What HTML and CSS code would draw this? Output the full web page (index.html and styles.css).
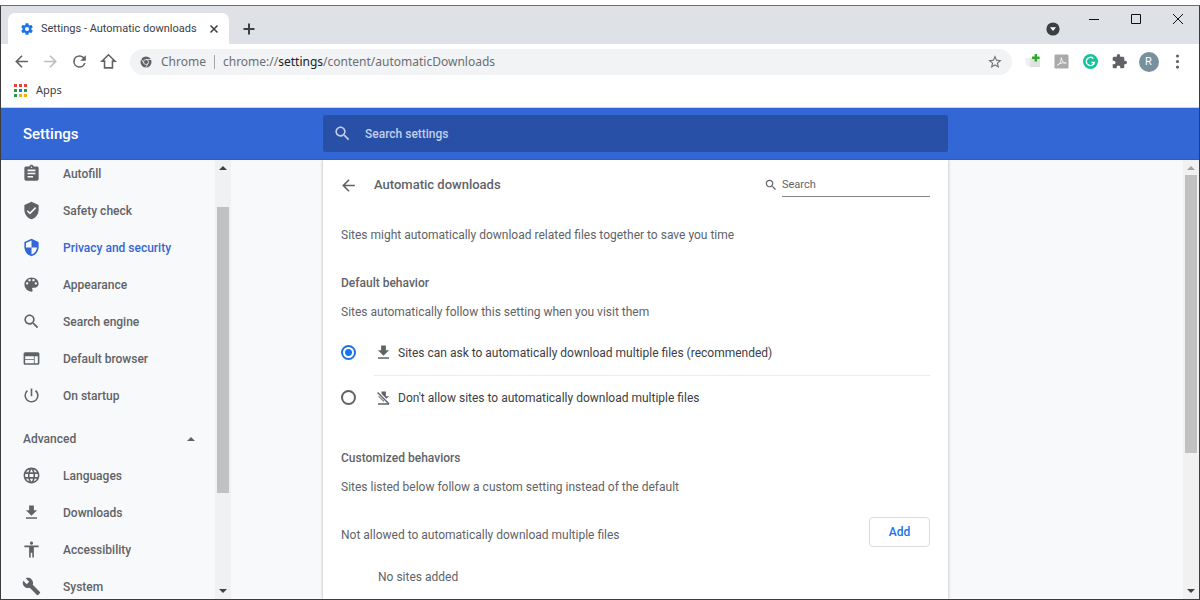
FILE: index.html
```html
<!DOCTYPE html>
<html lang="en">
<head>
<meta charset="utf-8">
<title>Settings - Automatic downloads</title>
<link rel="stylesheet" href="styles.css">
</head>
<body>
<svg class="defs" aria-hidden="true">
  <symbol id="search" viewBox="0 0 24 24"><path d="M15.5 14h-.79l-.28-.27C15.41 12.59 16 11.11 16 9.5 16 5.91 13.09 3 9.5 3S3 5.91 3 9.5 5.91 16 9.5 16c1.61 0 3.09-.59 4.23-1.57l.27.28v.79l5 4.99L20.49 19l-4.99-5zm-6 0C7.01 14 5 11.99 5 9.5S7.01 5 9.5 5 14 7.01 14 9.5 11.99 14 9.5 14z"/></symbol>
  <symbol id="back" viewBox="0 0 24 24"><path d="M20 11H7.83l5.59-5.59L12 4l-8 8 8 8 1.41-1.41L7.83 13H20v-2z"/></symbol>
  <symbol id="download" viewBox="0 0 24 24"><path d="M19 9h-4V3H9v6H5l7 7 7-7zM5 18v2h14v-2H5z"/></symbol>
</svg>
<div class="window">
  <div class="tabstrip">
    <div class="tab">
      <svg class="tab-icon" viewBox="0 0 24 24"><path fill-rule="evenodd" d="M19.43 12.98c.04-.32.07-.64.07-.98s-.03-.66-.07-.98l2.11-1.65c.19-.15.24-.42.12-.64l-2-3.46c-.12-.22-.39-.3-.61-.22l-2.49 1c-.52-.4-1.08-.73-1.69-.98l-.38-2.65A.49.49 0 0 0 14 2h-4c-.25 0-.46.18-.49.42l-.38 2.65c-.61.25-1.17.59-1.69.98l-2.49-1c-.23-.09-.49 0-.61.22l-2 3.46c-.13.22-.07.49.12.64l2.11 1.65c-.04.32-.07.65-.07.98s.03.66.07.98l-2.11 1.65c-.19.15-.24.42-.12.64l2 3.46c.12.22.39.3.61.22l2.49-1c.52.4 1.08.73 1.69.98l.38 2.65c.03.24.24.42.49.42h4c.25 0 .46-.18.49-.42l.38-2.65c.61-.25 1.17-.59 1.69-.98l2.49 1c.23.09.49 0 .61-.22l2-3.46c.12-.22.07-.49-.12-.64l-2.11-1.65zM12 15.5a3.5 3.5 0 1 1 0-7 3.5 3.5 0 0 1 0 7z"/></svg>
      <span class="tab-title">Settings - Automatic downloads</span>
      <button class="tab-close" aria-label="Close tab"><svg viewBox="0 0 10 10"><path d="M1.5 1.5l7 7M8.5 1.5l-7 7"/></svg></button>
    </div>
    <button class="new-tab" aria-label="New tab"><svg viewBox="0 0 12 12"><path d="M6 .5v11M.5 6h11"/></svg></button>
    <button class="tab-search" aria-label="Search tabs"><svg viewBox="0 0 14 14"><circle cx="7" cy="7" r="6.6"/><path d="M4 5.3h6L7 9z"/></svg></button>
    <div class="controls">
      <button aria-label="Minimize"><svg viewBox="0 0 12 12"><path d="M1 6.5h10"/></svg></button>
      <button aria-label="Maximize"><svg viewBox="0 0 12 12"><path d="M1.5 1.5h9v9h-9z"/></svg></button>
      <button aria-label="Close"><svg viewBox="0 0 12 12"><path d="M1 1l10 10M11 1L1 11"/></svg></button>
    </div>
  </div>

  <div class="toolbar">
    <div class="tools">
      <button aria-label="Back"><svg class="icon"><use href="#back"/></svg></button>
      <button class="off" aria-label="Forward"><svg class="icon" viewBox="0 0 24 24"><path d="M12 4l-1.41 1.41L16.17 11H4v2h12.17l-5.58 5.59L12 20l8-8z"/></svg></button>
      <button aria-label="Reload"><svg class="icon" viewBox="0 0 24 24"><path d="M17.65 6.35A7.96 7.96 0 0 0 12 4a8 8 0 1 0 7.73 10h-2.08A6 6 0 1 1 12 6c1.66 0 3.14.69 4.22 1.78L13 11h7V4l-2.350 2.350z"/></svg></button>
      <button aria-label="Home"><svg class="icon" viewBox="0 0 24 24"><path d="M12 3.500L3.800 11.500H7V20h10v-8.500h3.200z" fill="none" stroke="currentColor" stroke-width="2"/></svg></button>
    </div>
    <div class="omnibox">
      <svg class="site-icon" viewBox="0 0 24 24"><circle cx="12" cy="12" r="11"/><g fill="none" stroke="#f1f3f4" stroke-width="1.500"><circle cx="12" cy="12" r="5"/><path d="M12 7h10M7.700 14.500L2.700 6M16.300 14.500L11.500 23"/></g></svg>
      <span class="site">Chrome</span>
      <span class="url">chrome://<b>settings</b>/content/automaticDownloads</span>
      <button class="star" aria-label="Bookmark this tab"><svg viewBox="0 0 24 24"><path d="M22 9.240l-7.190-.62L12 2 9.190 8.630 2 9.240l5.460 4.730L5.820 21 12 17.270 18.180 21l-1.630-7.030L22 9.240zM12 15.400l-3.760 2.270 1-4.280-3.320-2.880 4.380-.38L12 6.100l1.710 4.040 4.380.38-3.320 2.880 1 4.280L12 15.400z"/></svg></button>
    </div>
    <div class="tools">
      <button aria-label="Page extension"><svg class="ext" viewBox="0 0 16 16"><path d="M5 4h11v10H5z" fill="#e0e0e0"/><path d="M1 5h4v7H2zM5 4l3 8" fill="#f0f0f0" stroke="#ececec"/><path d="M11.500 0v8M7.500 4h8" stroke="#2aa82a" stroke-width="2.500"/></svg></button>
      <button aria-label="Acrobat"><svg class="ext" viewBox="0 0 16 16"><rect width="15" height="15" x=".5" y=".5" rx="1.500" fill="#aaa"/><path d="M3.500 12c2-.8 4.500-4 4.300-8.200.3 4 2 5.700 5.200 5.900-3-.8-6.500-.2-9.500 2.300z" fill="none" stroke="#f6f6f6"/></svg></button>
      <button aria-label="Grammarly"><svg class="ext" viewBox="0 0 16 16"><circle cx="8" cy="8" r="8" fill="#15c39a"/><path d="M11 4.800A4.400 4.400 0 1 0 12.200 9H9" fill="none" stroke="#fff" stroke-width="1.500"/></svg></button>
      <button aria-label="Extensions"><svg class="ext" viewBox="1 1 22 22"><path d="M20.500 11H19V7a2 2 0 0 0-2-2h-4V3.500a2.500 2.500 0 0 0-5 0V5H4a2 2 0 0 0-2 2v3.800h1.500a2.700 2.700 0 0 1 0 5.400H2V20c0 1.100.9 2 2 2h3.800v-1.500a2.700 2.700 0 0 1 5.400 0V22H17a2 2 0 0 0 2-2v-4h1.500a2.500 2.500 0 0 0 0-5z"/></svg></button>
      <button class="avatar" aria-label="Profile R"><span>R</span></button>
      <button aria-label="Menu"><svg class="icon" viewBox="0 0 24 24"><circle cx="12" cy="5" r="2"/><circle cx="12" cy="12" r="2"/><circle cx="12" cy="19" r="2"/></svg></button>
    </div>
  </div>

  <div class="bookmarks">
    <a href="#apps"><svg viewBox="0 0 13 13"><g fill="#ea4335"><path d="M0 0h3v3H0zM5 0h3v3H5zM10 0h3v3h-3z"/></g><path fill="#1e9b4c" d="M0 5h3v3H0zM0 10h3v3H0z"/><path fill="#1a73e8" d="M5 5h3v3H5z"/><path fill="#1e9b4c" d="M10 5h3v3h-3z"/><path fill="#fbaf00" d="M5 10h3v3H5zM10 10h3v3h-3z"/></svg>Apps</a>
  </div>

  <header class="header">
    <h1>Settings</h1>
    <label class="search-settings"><svg class="icon"><use href="#search"/></svg><input type="text" placeholder="Search settings" aria-label="Search settings"></label>
  </header>

  <div class="page">
    <div class="sidebar">
      <nav class="nav">
        <a href="#autofill"><svg class="icon" viewBox="0 0 24 24"><path d="M19 3h-4.180C14.400 1.840 13.300 1 12 1s-2.400.84-2.820 2H5c-1.100 0-2 .9-2 2v14c0 1.100.9 2 2 2h14c1.100 0 2-.9 2-2V5c0-1.100-.9-2-2-2zm-7 0c.55 0 1 .45 1 1s-.45 1-1 1-1-.45-1-1 .45-1 1-1zm2 14H7v-2h7v2zm3-4H7v-2h10v2zm0-4H7V7h10v2z"/></svg>Autofill</a>
        <a href="#safety"><svg class="icon" viewBox="0 0 24 24"><path d="M12 1L3 5v6c0 5.550 3.840 10.740 9 12 5.160-1.260 9-6.450 9-12V5l-9-4zm-2 16l-4-4 1.410-1.410L10 14.170l6.590-6.590L18 9l-8 8z"/></svg>Safety check</a>
        <a href="#privacy" class="current" aria-current="page"><svg class="icon" viewBox="0 0 24 24"><path d="M12 1L3 5v6c0 5.550 3.840 10.740 9 12 5.160-1.260 9-6.450 9-12V5l-9-4zm0 10.990h7c-.53 4.120-3.280 7.790-7 8.940V12H5V6.300l7-3.110v8.800z"/></svg>Privacy and security</a>
        <a href="#appearance"><svg class="icon" viewBox="0 0 24 24"><path d="M12 3a9 9 0 0 0 0 18c.83 0 1.500-.67 1.500-1.500 0-.39-.15-.74-.39-1.010-.23-.26-.38-.61-.38-.99 0-.83.67-1.500 1.500-1.500H16c2.760 0 5-2.240 5-5 0-4.420-4.030-8-9-8zm-5.500 9a1.500 1.500 0 1 1 0-3 1.500 1.500 0 0 1 0 3zm3-4a1.500 1.500 0 1 1 0-3 1.500 1.500 0 0 1 0 3zm5 0a1.500 1.500 0 1 1 0-3 1.500 1.500 0 0 1 0 3zm3 4a1.500 1.500 0 1 1 0-3 1.500 1.500 0 0 1 0 3z"/></svg>Appearance</a>
        <a href="#engine"><svg class="icon"><use href="#search"/></svg>Search engine</a>
        <a href="#browser"><svg class="icon" viewBox="0 0 24 24"><path d="M20 4H4c-1.100 0-1.990.9-1.990 2L2 18c0 1.100.9 2 2 2h16c1.100 0 2-.9 2-2V6c0-1.100-.9-2-2-2zm-5 14H4v-4h11v4zm0-5H4V9h11v4zm5 5h-4V9h4v9z"/></svg>Default browser</a>
        <a href="#startup"><svg class="icon" viewBox="0 0 24 24"><path d="M13 3h-2v10h2V3zm4.830 2.170l-1.420 1.420A6.920 6.920 0 0 1 19 12a7 7 0 1 1-11.420-5.420L6.170 5.170A8.930 8.930 0 0 0 3 12a9 9 0 0 0 18 0c0-2.740-1.230-5.180-3.170-6.830z"/></svg>On startup</a>
        <button class="advanced" aria-expanded="true">Advanced<svg viewBox="0 0 8 4"><path d="M0 4l4-4 4 4z"/></svg></button>
        <a href="#languages"><svg class="icon" viewBox="0 0 24 24"><path d="M11.990 2C6.470 2 2 6.480 2 12s4.470 10 9.990 10C17.520 22 22 17.520 22 12S17.520 2 11.990 2zm6.930 6h-2.950a15.650 15.650 0 0 0-1.380-3.560A8.030 8.030 0 0 1 18.920 8zM12 4.040c.83 1.200 1.480 2.530 1.910 3.960h-3.820c.43-1.430 1.080-2.760 1.910-3.960zM4.260 14C4.100 13.360 4 12.690 4 12s.1-1.360.26-2h3.380c-.08.66-.14 1.320-.14 2s.06 1.340.14 2H4.260zm.82 2h2.950c.32 1.250.78 2.450 1.380 3.560A7.990 7.990 0 0 1 5.080 16zm2.950-8H5.080a7.990 7.990 0 0 1 4.330-3.560A15.650 15.650 0 0 0 8.030 8zM12 19.960c-.83-1.200-1.480-2.530-1.910-3.960h3.820c-.43 1.430-1.080 2.760-1.910 3.960zM14.340 14H9.660c-.09-.66-.16-1.320-.16-2s.07-1.350.16-2h4.680c.09.650.16 1.320.16 2s-.07 1.340-.16 2zm.25 5.560c.6-1.110 1.060-2.310 1.380-3.560h2.950a8.030 8.030 0 0 1-4.330 3.560zM16.360 14c.08-.66.14-1.320.14-2s-.06-1.340-.14-2h3.380c.16.640.26 1.310.26 2s-.1 1.360-.26 2h-3.380z"/></svg>Languages</a>
        <a href="#downloads"><svg class="icon"><use href="#download"/></svg>Downloads</a>
        <a href="#accessibility"><svg class="icon" viewBox="0 0 24 24"><path d="M12 2c1.100 0 2 .9 2 2s-.9 2-2 2-2-.9-2-2 .9-2 2-2zm9 7h-6v13h-2v-6h-2v6H9V9H3V7h18v2z"/></svg>Accessibility</a>
        <a href="#system"><svg class="icon" viewBox="0 0 24 24"><path d="M22.700 19l-9.100-9.100c.9-2.300.4-5-1.500-6.900-2-2-5-2.400-7.400-1.300L9 6 6 9 1.600 4.700C.4 7.100.9 10.100 2.900 12.100c1.900 1.900 4.600 2.400 6.900 1.500l9.100 9.100c.4.4 1 .4 1.400 0l2.300-2.300c.5-.4.5-1.100.1-1.400z"/></svg>System</a>
      </nav>
      <div class="scrollbar side-scroll" aria-hidden="true"><svg viewBox="0 0 8 4"><path d="M0 4l4-4 4 4z"/></svg><div class="track"><div class="thumb"></div></div><svg viewBox="0 0 8 4"><path d="M0 0l4 4 4-4z"/></svg></div>
    </div>

    <main class="content">
      <section class="card">
        <div class="card-head">
          <button class="return" aria-label="Back to site settings"><svg class="icon"><use href="#back"/></svg></button>
          <h2>Automatic downloads</h2>
          <label class="search"><svg><use href="#search"/></svg><input type="text" placeholder="Search" aria-label="Search"></label>
        </div>
        <p class="intro">Sites might automatically download related files together to save you time</p>

        <h3>Default behavior</h3>
        <p class="note">Sites automatically follow this setting when you visit them</p>
        <div class="options">
          <div class="option"><input type="radio" name="dl" id="ask" checked><label for="ask"><svg class="icon"><use href="#download"/></svg>Sites can ask to automatically download multiple files (recommended)</label></div>
          <div class="option"><input type="radio" name="dl" id="block"><label for="block"><svg class="icon" viewBox="0 0 24 24"><path d="M9.500 3H15v6h4l-3.300 3.300-6.200-6.200zM5 18v2h14v-2zM5 9h1.500l6.300 6.300L12 16z"/><path d="M4.500 4.500L19 19" stroke="currentColor" stroke-width="1.800"/></svg>Don't allow sites to automatically download multiple files</label></div>
        </div>

        <h3>Customized behaviors</h3>
        <p class="note">Sites listed below follow a custom setting instead of the default</p>
        <div class="list-head"><p>Not allowed to automatically download multiple files</p><button class="add">Add</button></div>
        <p class="empty">No sites added</p>
      </section>
    </main>
    <div class="scrollbar main-scroll" aria-hidden="true"><svg class="dim" viewBox="0 0 8 4"><path d="M0 4l4-4 4 4z"/></svg><div class="track"><div class="thumb"></div></div><svg viewBox="0 0 8 4"><path d="M0 0l4 4 4-4z"/></svg></div>
  </div>
</div>
</body>
</html>
```

FILE: styles.css
```css
* { box-sizing: border-box; }

body {
  margin: 0;
  padding-top: 5px;
  height: 100vh;
  background: #fff;
  color: #5f6368;
  font: 12px/20px Roboto, "Liberation Sans", sans-serif;
}

h1, h2, h3, p { margin: 0; }
a { color: inherit; text-decoration: none; }
svg { display: block; flex: none; fill: currentColor; }

button {
  display: flex;
  align-items: center;
  justify-content: center;
  padding: 0;
  border: 0;
  background: none;
  color: inherit;
  font: inherit;
}

input { font: inherit; color: inherit; border: 0; margin: 0; padding: 0; background: none; min-width: 0; outline: 0; }
input::placeholder { color: inherit; opacity: 1; }

.defs { position: absolute; width: 0; height: 0; }
.icon { width: 19px; height: 19px; }

.window {
  display: flex;
  flex-direction: column;
  height: 100%;
  border: 1px solid #3c3c3f;
  border-top-color: #6d6e72;
  overflow: hidden;
}

/* Tab strip */
.tabstrip {
  display: flex;
  flex: none;
  height: 38px;
  background: #dee1e6;
  color: #3c4043;
}

.tab {
  display: flex;
  align-items: center;
  width: 221px;
  margin: 7px 0 0 7px;
  padding: 0 9px 0 12px;
  border-radius: 7px 7px 0 0;
  background: #fff;
}

.tab-icon { width: 14px; height: 14px; margin-right: 7px; color: #1a73e8; }
.tab-title { flex: 1; font-size: 11px; white-space: nowrap; }
.tab-close { width: 12px; height: 12px; }
.tab-close svg { width: 10px; height: 10px; stroke: currentColor; stroke-width: 1.5; }
.new-tab { width: 40px; margin-top: 8px; }
.new-tab svg { width: 12px; height: 12px; stroke: currentColor; stroke-width: 2; }
.tab-search { margin: 8px 13px 0 auto; }
.tab-search svg { width: 14px; height: 14px; }
.tab-search path { fill: #fff; }
.controls { display: flex; height: 26px; color: #111; }
.controls button { width: 42px; }
.controls svg { width: 12px; height: 12px; fill: none; stroke: currentColor; }

/* Address bar */
.toolbar {
  display: flex;
  flex: none;
  align-items: center;
  gap: 6px;
  height: 35px;
  padding: 0 7px 0 6px;
}

.tools { display: flex; }
.tools button { width: 29px; height: 29px; }
.tools .off { color: #babcbe; }
.ext { width: 15px; height: 15px; }

.omnibox {
  display: flex;
  flex: 1;
  align-items: center;
  height: 26px;
  margin-left: 1px;
  padding: 0 9px 0 10px;
  border-radius: 13px;
  background: #f1f3f4;
  color: #6b6e72;
  font: 12px/20px "Noto Sans", sans-serif;
}

.site-icon { width: 12px; height: 12px; margin-right: 9px; color: #5f6368; }
.site { padding-right: 8px; border-right: 1px solid #a5a8ac; line-height: 14px; }
.url { margin-left: 8px; }
.url b { font-weight: 400; color: #202124; }
.star { margin-left: auto; }
.star svg { width: 16px; height: 16px; }

.avatar span {
  width: 20px;
  border-radius: 50%;
  background: #78909c;
  color: #fff;
  font-size: 11px;
  line-height: 20px;
}

.bookmarks {
  flex: none;
  height: 29px;
  padding: 1px 13px;
  border-bottom: 1px solid #d0d2d5;
  color: #3c4043;
  font: 11px/20px "Noto Sans", sans-serif;
}

.bookmarks a { display: flex; align-items: center; gap: 9px; }
.bookmarks svg { width: 13px; height: 13px; }

/* Settings header */
.header {
  display: flex;
  flex: none;
  align-items: center;
  height: 52px;
  padding-left: 22px;
  border-bottom: 1px solid #2a5bcb;
  background: #3367d6;
  color: #fff;
}

.header h1 { width: 300px; font-size: 15px; font-weight: 500; }

.search-settings {
  display: flex;
  flex: 0 1 625px;
  align-items: center;
  gap: 13px;
  height: 37px;
  padding: 0 10px;
  border-radius: 2px;
  background: #2850a7;
  color: #c3cfea;
}

.search-settings input { flex: 1; font-weight: 500; }

/* Body */
.page { display: flex; flex: 1; min-height: 0; background: #f8f9fa; }
.sidebar { display: flex; width: 230px; overflow: hidden; }

.nav { flex: 1; margin-top: -5px; font-weight: 500; }
.nav a { display: flex; align-items: center; gap: 22px; height: 37px; padding-left: 21px; }
.nav .current { color: #3367d6; }

.advanced {
  width: 100%;
  height: 36px;
  margin-top: 7px;
  padding: 0 20px 0 22px;
  justify-content: space-between;
}

.advanced svg { width: 8px; height: 4px; }

.scrollbar {
  display: flex;
  flex: none;
  flex-direction: column;
  align-items: center;
  width: 16px;
  padding: 6px 0;
  background: #f1f1f1;
  color: #404040;
}

.scrollbar svg { width: 8px; height: 4px; }
.scrollbar .dim { color: #a3a3a3; }
.track { flex: 1; width: 12px; margin: 5px 0; }
.thumb { background: #c1c1c1; }
.side-scroll .thumb { height: 70%; margin-top: 32px; }
.main-scroll .thumb { height: 68%; }

.content { display: flex; flex: 1; padding-left: 92px; overflow: hidden; }

.card {
  flex: 0 1 625px;
  padding: 0 18px;
  background: #fff;
  box-shadow: 0 0 3px rgba(60, 64, 67, .4);
}

.card-head { display: flex; align-items: center; height: 50px; }
.return { width: 15px; }
.card-head h2 { margin-left: 18px; font-size: 13px; font-weight: 500; }
.search { display: flex; align-items: center; gap: 4px; margin-left: auto; font-size: 11px; }
.search svg { width: 14px; height: 14px; }
.search input { width: 148px; height: 24px; border-bottom: 1px solid #80868b; }

.intro { margin-top: 15px; }
.card h3 { margin-top: 28px; font-size: 12px; font-weight: 500; }
.note { margin-top: 9px; }

.options { margin-top: 8px; }
.option { display: flex; align-items: center; gap: 18px; color: #3c4043; }
.option label { display: flex; flex: 1; align-items: center; gap: 5px; height: 45px; }
.option .icon { color: #5f6368; }
.option + .option label { border-top: 1px solid #ececee; }

.option input {
  appearance: none;
  width: 15px;
  height: 15px;
  border: 2px solid #5f6368;
  border-radius: 50%;
}

.option input:checked { border-color: #1a73e8; background: radial-gradient(#1a73e8 3px, #fff 4px); }

.list-head { display: flex; align-items: flex-end; justify-content: space-between; margin-top: 20px; }
.list-head p { padding-bottom: 2px; }

.add {
  width: 61px;
  height: 30px;
  border: 1px solid #dadce0;
  border-radius: 4px;
  color: #1a73e8;
  font-weight: 500;
}

.empty { margin: 20px 0 0 37px; }
```
